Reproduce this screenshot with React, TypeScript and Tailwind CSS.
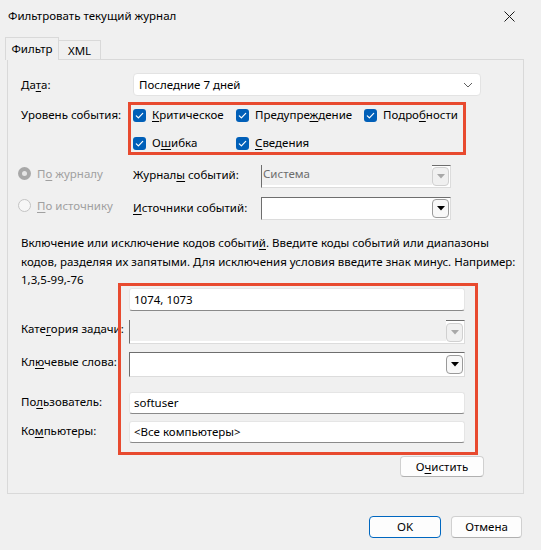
import React from 'react';

function U({ children }: { children: React.ReactNode }) {
  return <span className="underline decoration-1 underline-offset-2">{children}</span>;
}

function Check({ label }: { label: React.ReactNode }) {
  return (
    <div className="flex items-center h-[20px]">
      <span className="w-[13px] h-[13px] rounded-[3px] bg-[#005fb8] flex items-center justify-center">
        <svg width="11" height="11" viewBox="0 0 11 11">
          <path d="M2.3 5.8 L4.4 7.9 L8.7 3.4" fill="none" stroke="#fff" strokeWidth="1.2" strokeLinecap="round" strokeLinejoin="round" />
        </svg>
      </span>
      <span className="ml-[6px]">{label}</span>
    </div>
  );
}

function ArrowBtn({ disabled }: { disabled?: boolean }) {
  return (
    <div
      className={
        'w-[17px] h-[19px] mr-[1px] rounded-[4px] border flex items-center justify-center ' +
        (disabled ? 'border-[#d0d0d0] bg-[#f0f0f0]' : 'border-[#9a9a9a] bg-[#f8f8f8]')
      }
    >
      <svg width="8" height="5" viewBox="0 0 8 5">
        <path d="M0 0 H8 L4 4.5 Z" fill={disabled ? '#a8a8a8' : '#000'} />
      </svg>
    </div>
  );
}

function ClassicCombo({ width, height, disabled, value }: { width: string; height: string; disabled?: boolean; value?: string }) {
  return (
    <div
      className={
        width + ' ' + height +
        ' border border-t-[#6e6e6e] border-l-[#6e6e6e] border-r-[#dcdcdc] border-b-[#dcdcdc] flex items-center justify-between bg-white'
      }
    >
      <div className={'flex-1 h-full flex items-start ' + (disabled ? 'bg-[#f0f0f0] mb-[5px]' : '')}>
        {value && <span className="pl-[1px] pt-[1px] text-[#6d6d6d]">{value}</span>}
      </div>
      <ArrowBtn disabled={disabled} />
    </div>
  );
}

function TextBox({ value, height }: { value?: string; height: string }) {
  return (
    <div className={'w-[336px] ' + height + ' bg-white border border-[#e5e5e5] border-b-[#8a8a8a] rounded-[3px] flex items-center pl-[4px]'}>
      {value}
    </div>
  );
}

export default function App() {
  return (
    <div className="w-[541px] h-[550px] bg-[#f0f0f0] text-[11.5px] text-black font-['Noto_Sans',sans-serif] flex flex-col overflow-hidden">
      {/* title bar */}
      <div className="h-[32px] flex items-center justify-between pl-[8px] pr-[26px]">
        <span className="text-[11.5px]">Фильтровать текущий журнал</span>
        <svg width="11" height="11" viewBox="0 0 11 11">
          <path d="M0.5 0.5 L10.5 10.5 M10.5 0.5 L0.5 10.5" stroke="#1a1a1a" strokeWidth="1" />
        </svg>
      </div>

      {/* tabs */}
      <div className="flex items-end pl-[5px] mt-[5px] relative z-10 -mb-[1px]">
        <div className="w-[54px] h-[23px] border border-b-0 border-[#d9d9d9] bg-[#f0f0f0] flex items-center justify-center">
          Фильтр
        </div>
        <div className="w-[42px] h-[20px] border border-l-0 border-b-0 border-[#d9d9d9] flex items-center justify-center">
          XML
        </div>
      </div>

      {/* panel */}
      <div className="relative ml-[7px] w-[517px] h-[435px] border border-[#d9d9d9] pl-[13px] pt-[13px]">
        <div className="flex items-center h-[23px]">
          <div className="w-[112px]">
            Да<U>т</U>а:
          </div>
          <div className="w-[348px] h-[23px] bg-white border border-[#e3e3e3] rounded-[4px] flex items-center justify-between pl-[5px] pr-[7px]">
            <span>Последние 7 дней</span>
            <svg width="10" height="6" viewBox="0 0 10 6">
              <path d="M1 1 L5 5 L9 1" fill="none" stroke="#606060" strokeWidth="1" />
            </svg>
          </div>
        </div>

        <div className="flex mt-[6px] h-[53px]">
          <div className="w-[112px] pt-[4px]">Уровень события:</div>
          <div className="grid grid-cols-[103px_128px_auto] gap-y-[8px] pt-[3px] content-start">
            <Check label={<><U>К</U>ритическое</>} />
            <Check label={<>Предупре<U>ж</U>дение</>} />
            <Check label={<>Подро<U>б</U>ности</>} />
            <Check label={<>О<U>ш</U>ибка</>} />
            <Check label={<><U>С</U>ведения</>} />
          </div>
        </div>

        <div className="flex items-start h-[23px] mt-[10px]">
          <div className="w-[115px] -ml-[3px] flex items-center text-[#a0a0a0] pt-[0px]">
            <span className="w-[13px] h-[13px] rounded-full bg-[#a8a8a8] flex items-center justify-center">
              <span className="w-[5px] h-[5px] rounded-full bg-[#e6e6e6]" />
            </span>
            <span className="ml-[6px]">
              П<U>о</U> журналу
            </span>
          </div>
          <div className="w-[128px] pt-[1px]">
            Журнал<U>ы</U> событий:
          </div>
          <ClassicCombo width="w-[190px]" height="h-[23px]" disabled value="Система" />
        </div>

        <div className="flex items-start h-[23px] mt-[9px]">
          <div className="w-[115px] -ml-[3px] flex items-center text-[#a0a0a0]">
            <span className="w-[13px] h-[13px] rounded-full border border-[#c4c4c4] bg-[#f6f6f6]" />
            <span className="ml-[6px]">
              <U>П</U>о источнику
            </span>
          </div>
          <div className="w-[128px] pt-[2px]">
            <U>И</U>сточники событий:
          </div>
          <ClassicCombo width="w-[190px]" height="h-[23px]" />
        </div>

        <p className="mt-[14px] h-[49px] whitespace-nowrap leading-[18.5px]">
          Включение или исключение кодов событи<U>й</U>. Введите коды событий или диапазоны
          <br />
          кодов, разделяя их запятыми. Для исключения условия введите знак минус. Например:
          <br />
          1,3,5-99,-76
        </p>

        <div className="flex items-center mt-[5px]">
          <div className="w-[108px]" />
          <TextBox height="h-[23px]" value="1074, 1073" />
        </div>
        <div className="flex items-start mt-[9px]">
          <div className="w-[108px] pt-[0px]">
            Кате<U>г</U>ория задачи:
          </div>
          <ClassicCombo width="w-[336px]" height="h-[24px]" disabled />
        </div>
        <div className="flex items-start mt-[8px]">
          <div className="w-[108px] pt-[1px]">
            Кл<U>ю</U>чевые слова:
          </div>
          <ClassicCombo width="w-[336px]" height="h-[25px]" />
        </div>
        <div className="flex items-start mt-[15px]">
          <div className="w-[108px] pt-[1px]">
            По<U>л</U>ьзователь:
          </div>
          <TextBox height="h-[22px]" value="softuser" />
        </div>
        <div className="flex items-start mt-[7px]">
          <div className="w-[108px] pt-[1px]">
            Ко<U>м</U>пьютеры:
          </div>
          <TextBox height="h-[22px]" value="<Все компьютеры>" />
        </div>
        <div className="mt-[13px] ml-[379px] w-[84px] h-[21px] bg-[#fdfdfd] border border-[#d0d0d0] border-b-[#b0b0b0] rounded-[4px] flex items-center justify-center">
          О<U>ч</U>истить
        </div>

        {/* annotation frames */}
        <div className="absolute left-[120px] top-[42px] w-[338px] h-[53px] border-[3px] border-[#e84a2f] pointer-events-none" />
        <div className="absolute left-[110px] top-[223px] w-[360px] h-[172px] border-[3px] border-[#e84a2f] pointer-events-none" />
      </div>

      {/* footer */}
      <div className="flex justify-end gap-[10px] pr-[19px] mt-[22px]">
        <div className="w-[72px] h-[22px] bg-[#fdfdfd] border border-[#0067c0] rounded-[4px] flex items-center justify-center">
          OK
        </div>
        <div className="w-[71px] h-[22px] bg-[#fdfdfd] border border-[#d0d0d0] border-b-[#b0b0b0] rounded-[4px] flex items-center justify-center">
          Отмена
        </div>
      </div>
    </div>
  );
}
